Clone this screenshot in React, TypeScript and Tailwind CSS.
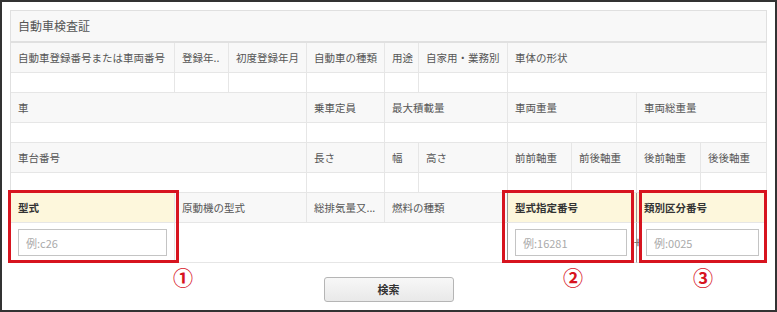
import React from "react";

const head = "flex items-center h-[30px] px-[7px] bg-[#f8f8f8] border-r border-b border-[#e6e6e6] text-[10.5px] text-[#555] whitespace-nowrap overflow-hidden";
const data = "h-[20px] bg-white border-r border-b border-[#e6e6e6]";
const yellow = "flex items-center h-[30px] px-[7px] bg-[#fdf7dc] border-r border-b border-[#e6e6e6] text-[10.5px] font-bold text-[#333] whitespace-nowrap";

const Field = ({ placeholder }: { placeholder: string }) => (
  <input
    placeholder={placeholder}
    className="w-full h-[27px] px-[7px] border border-[#c4c4c4] bg-white text-[11px] text-[#333] placeholder:text-[#aaa] outline-none"
  />
);

export default function App() {
  return (
    <div
      className="relative w-[777px] h-[312px] border-2 border-[#333] bg-white p-2"
      style={{ fontFamily: '"Noto Sans CJK JP", "Noto Sans", sans-serif' }}
    >
      <div className="border-l border-t border-[#e0e0e0]">
        <div className="h-[32px] flex items-center px-[7px] bg-[#f8f8f8] border-r border-b-2 border-[#e0e0e0] text-[12px] text-[#555]">
          自動車検査証
        </div>

        <div className="grid grid-cols-[164px_54px_78px_78px_34px_89px_64px_65px_64px_66px]">
          {/* row 1 */}
          <div className={head}>自動車登録番号または車両番号</div>
          <div className={head}>登録年..</div>
          <div className={head}>初度登録年月</div>
          <div className={head}>自動車の種類</div>
          <div className={head}>用途</div>
          <div className={head}>自家用・業務別</div>
          <div className={`${head} col-span-4`}>車体の形状</div>
          <div className={data} />
          <div className={data} />
          <div className={data} />
          <div className={data} />
          <div className={data} />
          <div className={data} />
          <div className={`${data} col-span-4`} />

          {/* row 2 */}
          <div className={`${head} col-span-3`}>車</div>
          <div className={head}>乗車定員</div>
          <div className={`${head} col-span-2`}>最大積載量</div>
          <div className={`${head} col-span-2`}>車両重量</div>
          <div className={`${head} col-span-2`}>車両総重量</div>
          <div className={`${data} col-span-3`} />
          <div className={data} />
          <div className={`${data} col-span-2`} />
          <div className={`${data} col-span-2`} />
          <div className={`${data} col-span-2`} />

          {/* row 3 */}
          <div className={`${head} col-span-3`}>車台番号</div>
          <div className={head}>長さ</div>
          <div className={head}>幅</div>
          <div className={head}>高さ</div>
          <div className={head}>前前軸重</div>
          <div className={head}>前後軸重</div>
          <div className={head}>後前軸重</div>
          <div className={head}>後後軸重</div>
          <div className={`${data} col-span-3`} />
          <div className={data} />
          <div className={data} />
          <div className={data} />
          <div className={data} />
          <div className={data} />
          <div className={data} />
          <div className={data} />

          {/* row 4 */}
          <div className={yellow}>型式</div>
          <div className={`${head} col-span-2`}>原動機の型式</div>
          <div className={head}>総排気量又...</div>
          <div className={`${head} col-span-2 border-r-[#999]`}>燃料の種類</div>
          <div className={`${yellow} col-span-2 border-r-[#999]`}>型式指定番号</div>
          <div className={`${yellow} col-span-2`}>類別区分番号</div>

          <div className="h-[40px] flex items-center px-[7px] border-r border-b border-[#e6e6e6]">
            <Field placeholder="例:c26" />
          </div>
          <div className="col-span-5 h-[40px] border-r border-b border-[#e6e6e6] border-r-[#999]" />
          <div className="relative col-span-2 h-[40px] flex items-center pl-[7px] pr-[9px] border-r border-b border-[#e6e6e6] border-r-[#999]">
            <Field placeholder="例:16281" />
            <span className="absolute right-[-6px] top-[11px] text-[15px] text-[#777] leading-none">+</span>
          </div>
          <div className="col-span-2 h-[40px] flex items-center pl-[9px] pr-[7px] border-r border-b border-[#e6e6e6]">
            <Field placeholder="例:0025" />
          </div>
        </div>
      </div>

      <div className="flex justify-center mt-[14px]">
        <button className="w-[130px] h-[25px] rounded-[3px] border border-[#b5b5b5] bg-gradient-to-b from-[#f7f7f7] to-[#e9e9e9] text-[11px] font-bold text-[#333]">
          検索
        </button>
      </div>

      {/* annotations */}
      <div className="absolute left-[6px] top-[188px] w-[171px] h-[73px] border-[3px] border-[#d7141f]" />
      <div className="absolute left-[500px] top-[188px] w-[132px] h-[73px] border-[3px] border-[#d7141f]" />
      <div className="absolute left-[637px] top-[188px] w-[128px] h-[73px] border-[3px] border-[#d7141f]" />
      <span className="absolute left-[171px] top-[266px] text-[20px] leading-none font-bold text-[#d7141f]">①</span>
      <span className="absolute left-[561px] top-[266px] text-[20px] leading-none font-bold text-[#d7141f]">②</span>
      <span className="absolute left-[691px] top-[266px] text-[20px] leading-none font-bold text-[#d7141f]">③</span>
    </div>
  );
}
